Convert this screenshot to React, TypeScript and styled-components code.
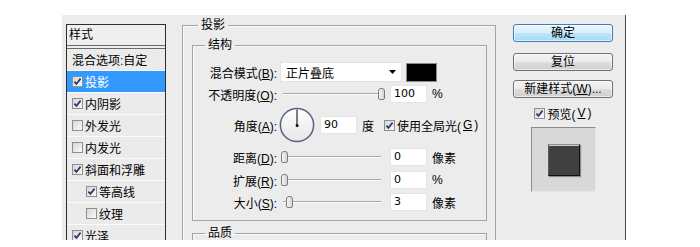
import React from 'react';
import styled, { createGlobalStyle } from 'styled-components';

const GlobalStyle = createGlobalStyle`
  html, body {
    margin: 0;
    padding: 0;
    background: #fff;
  }
  body {
    font-family: "Liberation Sans", "Noto Sans CJK SC", sans-serif;
    font-size: 12px;
    color: #000;
  }
`;

const Page = styled.div`
  padding: 15px 0 0 62px;
  height: 247px;
  box-sizing: border-box;
`;

const Dialog = styled.div`
  display: flex;
  width: 564px;
  height: 225px;
  background: #ececec;
  border-right: 1px solid #4a4a4a;
  box-sizing: border-box;
  overflow: hidden;
`;

/* ---------- left style list ---------- */

const LeftCol = styled.div`
  width: 104px;
  padding: 9px 0 0 4px;
  box-sizing: border-box;
  flex-shrink: 0;
`;

const StyleList = styled.div`
  width: 100px;
  height: 100%;
  border: 1px solid #2e2e2e;
  border-bottom: none;
  box-sizing: border-box;
  background: #ededed;
`;

const ListHeader = styled.div`
  height: 24px;
  line-height: 20px;
  padding-left: 2px;
  border-bottom: 4px double #6a6a6a;
  box-sizing: border-box;
  background: #efefef;
`;

const ListRow = styled.div<{ $selected?: boolean; $indent?: number }>`
  display: flex;
  align-items: center;
  gap: 2px;
  height: 22px;
  padding-left: ${p => p.$indent ?? 5}px;
  border-bottom: 1px solid #fbfbfb;
  box-sizing: border-box;
  background: ${p => (p.$selected ? '#3399ff' : '#ebebeb')};
  color: ${p => (p.$selected ? '#fff' : '#000')};
  white-space: nowrap;
`;

/* ---------- checkbox ---------- */

const CheckBox = styled.span`
  display: inline-flex;
  align-items: center;
  justify-content: center;
  width: 11px;
  height: 11px;
  flex-shrink: 0;
  border: 1px solid #8e8f8f;
  box-sizing: border-box;
  background: linear-gradient(135deg, #d6d6d6, #fafafa);
`;

function Check({ checked }: { checked?: boolean }) {
  return (
    <CheckBox>
      {checked && (
        <svg width="9" height="9" viewBox="0 0 9 9">
          <path d="M1.4 4.6 L3.4 6.9 L7.6 1.6" fill="none" stroke="#2b3a6b" strokeWidth="1.7" />
        </svg>
      )}
    </CheckBox>
  );
}

/* ---------- middle panel ---------- */

const Middle = styled.div`
  margin-left: 16px;
  width: 314px;
  flex-shrink: 0;
`;

const Group = styled.fieldset<{ $outer?: boolean; $minH?: number }>`
  margin: ${p => (p.$outer ? '2px 0 0 0' : '4px 0 0 0')};
  padding: ${p => (p.$outer ? '0 8px 0 9px' : '0')};
  min-width: 0;
  min-height: ${p => p.$minH ?? 0}px;
  border: 1px solid #a3a3a3;
  box-shadow: inset 1px 1px 0 #fafafa;
`;

const Legend = styled.legend<{ $offset: number }>`
  margin-left: ${p => p.$offset}px;
  padding: 0 3px;
  line-height: 16px;
`;

const FieldRow = styled.div<{ $mt?: number; $h?: number }>`
  display: flex;
  align-items: center;
  height: ${p => p.$h ?? 22}px;
  margin-top: ${p => p.$mt ?? 0}px;
`;

const Label = styled.div`
  width: 84px;
  flex-shrink: 0;
  text-align: right;
  white-space: nowrap;
`;

const Select = styled.div`
  display: flex;
  align-items: center;
  justify-content: space-between;
  width: 122px;
  height: 20px;
  margin-left: 3px;
  padding: 0 5px;
  box-sizing: border-box;
  background: #fff;
  border: 1px solid #e2e2e2;
`;

const Swatch = styled.div`
  width: 31px;
  height: 19px;
  margin-left: 4px;
  box-sizing: border-box;
  background: #000;
  border: 1px solid #8a8a8a;
`;

const Slider = styled.div`
  position: relative;
  width: 104px;
  height: 14px;
  margin-left: 4px;
  flex-shrink: 0;

  &::before {
    content: '';
    position: absolute;
    left: 2px;
    right: 4px;
    top: 6px;
    height: 1px;
    background: #a8a8a8;
    border-bottom: 1px solid #fdfdfd;
  }
`;

const Thumb = styled.span`
  position: absolute;
  top: 1px;
  width: 7px;
  height: 12px;
  box-sizing: border-box;
  border: 1px solid #7c7c7c;
  border-radius: 3px 3px 2px 2px;
  background: linear-gradient(90deg, #f6f6f6, #d4d4d4);
`;

const NumBox = styled.div<{ $ml?: number }>`
  width: 37px;
  height: 18px;
  margin-left: ${p => p.$ml ?? 5}px;
  padding-left: 3px;
  box-sizing: border-box;
  background: #fff;
  border: 1px solid #e4e4e4;
  font-family: "DejaVu Sans", sans-serif;
  font-size: 11px;
  line-height: 16px;
`;

const Unit = styled.span<{ $ml?: number }>`
  margin-left: ${p => p.$ml ?? 5}px;
  white-space: nowrap;
  display: inline-flex;
  align-items: center;
  gap: 2px;
`;

const DialWrap = styled.div`
  width: 36px;
  height: 36px;
  margin-left: 2px;
  flex-shrink: 0;
`;

function Dial() {
  return (
    <DialWrap>
      <svg width="36" height="36" viewBox="0 0 36 36">
        <defs>
          <linearGradient id="dialFill" x1="0" y1="0" x2="0" y2="1">
            <stop offset="0" stopColor="#ffffff" />
            <stop offset="1" stopColor="#e6e6e6" />
          </linearGradient>
        </defs>
        <circle cx="18" cy="18" r="16.6" fill="url(#dialFill)" stroke="#5d617d" strokeWidth="1.5" />
        <line x1="18" y1="18.5" x2="18" y2="2.5" stroke="#000" strokeWidth="1" />
        <rect x="16.8" y="17.3" width="2.6" height="2.6" fill="#000" />
      </svg>
    </DialWrap>
  );
}

/* ---------- right column ---------- */

const RightCol = styled.div`
  display: flex;
  flex-direction: column;
  align-items: center;
  width: 100px;
  margin-left: 17px;
  padding-top: 9px;
  flex-shrink: 0;
`;

const Button = styled.button<{ $primary?: boolean; $mt?: number }>`
  width: 100px;
  height: 18px;
  margin: ${p => p.$mt ?? 0}px 0 0 0;
  padding: 0;
  font: 12px/16px "Liberation Sans", "Noto Sans CJK SC", sans-serif;
  color: #000;
  border: 1px solid ${p => (p.$primary ? '#3c7fb1' : '#707070')};
  border-radius: 3px;
  background: ${p =>
    p.$primary
      ? 'linear-gradient(#e9f6fd 0%, #d7effc 50%, #bde6fd 51%, #a6d9f4 100%)'
      : 'linear-gradient(#f3f3f3 0%, #ebebeb 50%, #dddddd 51%, #cfcfcf 100%)'};
  box-shadow: inset 0 0 0 1px rgba(255, 255, 255, 0.6);
  white-space: nowrap;
`;

const PreviewToggle = styled.div`
  display: flex;
  align-items: center;
  gap: 2px;
  height: 14px;
  margin-top: 8px;
`;

const PreviewBox = styled.div`
  display: flex;
  align-items: center;
  justify-content: center;
  width: 65px;
  height: 65px;
  margin-top: 7px;
  box-sizing: border-box;
  background: #d8d8d8;
  border-top: 1px solid #8a8a8a;
  border-left: 1px solid #8a8a8a;
  border-right: 1px solid #e6e6e6;
  border-bottom: 1px solid #e6e6e6;
`;

const PreviewSquare = styled.div`
  width: 32px;
  height: 32px;
  margin: 1px 0 0 1px;
  box-sizing: border-box;
  background: #404040;
  border: 1px solid;
  border-color: #8c8c8c #101010 #101010 #5a5a5a;
  box-shadow: inset 0 1px 0 #cfcfcf, 1px 1px 1px rgba(0, 0, 0, 0.35);
`;

/* ---------- data ---------- */

const styles = [
  { name: '投影', checked: true, selected: true },
  { name: '内阴影', checked: true },
  { name: '外发光', checked: false },
  { name: '内发光', checked: false },
  { name: '斜面和浮雕', checked: true },
  { name: '等高线', checked: true, indent: true },
  { name: '纹理', checked: false, indent: true },
  { name: '光泽', checked: true },
];

type SliderField = {
  label: string;
  key: string;
  pos: number;
  value: string;
  unit: string;
  mt: number;
};

const lower: SliderField[] = [
  { label: '距离', key: 'D', pos: 0, value: '0', unit: '像素', mt: 3 },
  { label: '扩展', key: 'R', pos: 0, value: '0', unit: '%', mt: 1 },
  { label: '大小', key: 'S', pos: 0.055, value: '3', unit: '像素', mt: 0 },
];

const THUMB_RANGE = 97;

export default function App() {
  return (
    <>
      <GlobalStyle />
      <Page>
        <Dialog>
          <LeftCol>
            <StyleList>
              <ListHeader>样式</ListHeader>
              <ListRow>混合选项:自定</ListRow>
              {styles.map(s => (
                <ListRow key={s.name} $selected={s.selected} $indent={s.indent ? 19 : 5}>
                  <Check checked={s.checked} />
                  {s.name}
                </ListRow>
              ))}
            </StyleList>
          </LeftCol>

          <Middle>
            <Group $outer>
              <Legend $offset={6}>投影</Legend>
              <Group>
                <Legend $offset={12}>结构</Legend>
                <FieldRow $mt={8}>
                  <Label>
                    混合模式(<u>B</u>):
                  </Label>
                  <Select>
                    <span>正片叠底</span>
                    <svg width="7" height="4" viewBox="0 0 7 4">
                      <polygon points="0,0 7,0 3.5,4" fill="#000" />
                    </svg>
                  </Select>
                  <Swatch />
                </FieldRow>
                <FieldRow>
                  <Label>
                    不透明度(<u>O</u>):
                  </Label>
                  <Slider>
                    <Thumb style={{ left: THUMB_RANGE }} />
                  </Slider>
                  <NumBox $ml={5}>100</NumBox>
                  <Unit>%</Unit>
                </FieldRow>
                <FieldRow $mt={2} $h={36}>
                  <Label>
                    角度(<u>A</u>):
                  </Label>
                  <Dial />
                  <NumBox $ml={5}>90</NumBox>
                  <Unit>度</Unit>
                  <Unit $ml={10}>
                    <Check checked />
                    使用全局光(<u>G</u>)
                  </Unit>
                </FieldRow>
                {lower.map(f => (
                  <FieldRow key={f.key} $mt={f.mt}>
                    <Label>
                      {f.label}(<u>{f.key}</u>):
                    </Label>
                    <Slider>
                      <Thumb style={{ left: Math.round(f.pos * THUMB_RANGE) }} />
                    </Slider>
                    <NumBox $ml={5}>{f.value}</NumBox>
                    <Unit>{f.unit}</Unit>
                  </FieldRow>
                ))}
                <div style={{ height: 7 }} />
              </Group>
              <Group $minH={40}>
                <Legend $offset={12}>品质</Legend>
              </Group>
            </Group>
          </Middle>

          <RightCol>
            <Button $primary>确定</Button>
            <Button $mt={11}>复位</Button>
            <Button $mt={9}>
              新建样式(<u>W</u>)...
            </Button>
            <PreviewToggle>
              <Check checked />
              预览(<u>V</u>)
            </PreviewToggle>
            <PreviewBox>
              <PreviewSquare />
            </PreviewBox>
          </RightCol>
        </Dialog>
      </Page>
    </>
  );
}
